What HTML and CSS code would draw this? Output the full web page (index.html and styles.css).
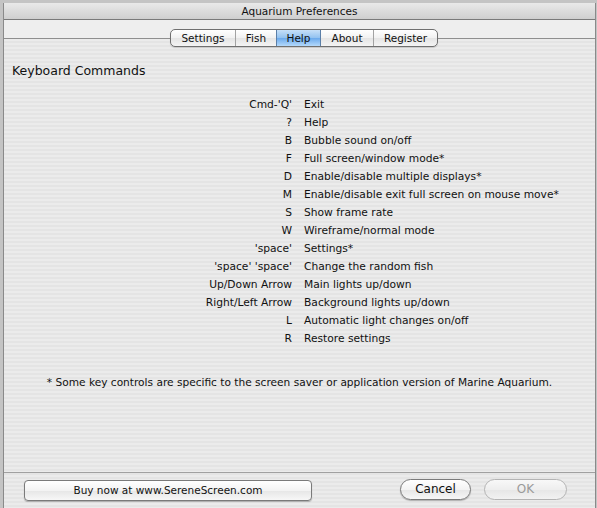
FILE: index.html
```html
<!DOCTYPE html>
<html>
<head>
<meta charset="utf-8">
<link rel="stylesheet" href="styles.css">
</head>
<body>
<div class="window">
  <div class="titlebar">Aquarium Preferences</div>
  <div class="toolstrip"></div>
  <div class="panel">
    <div class="tabs">
      <div class="tab t-settings">Settings</div>
      <div class="tab t-fish">Fish</div>
      <div class="tab t-help active">Help</div>
      <div class="tab t-about">About</div>
      <div class="tab t-register">Register</div>
    </div>
    <div class="heading">Keyboard Commands</div>
    <div class="commands">
      <div class="key">Cmd-'Q'</div><div class="desc">Exit</div>
      <div class="key">?</div><div class="desc">Help</div>
      <div class="key">B</div><div class="desc">Bubble sound on/off</div>
      <div class="key">F</div><div class="desc">Full screen/window mode*</div>
      <div class="key">D</div><div class="desc">Enable/disable multiple displays*</div>
      <div class="key">M</div><div class="desc">Enable/disable exit full screen on mouse move*</div>
      <div class="key">S</div><div class="desc">Show frame rate</div>
      <div class="key">W</div><div class="desc">Wireframe/normal mode</div>
      <div class="key">'space'</div><div class="desc">Settings*</div>
      <div class="key">'space' 'space'</div><div class="desc">Change the random fish</div>
      <div class="key">Up/Down Arrow</div><div class="desc">Main lights up/down</div>
      <div class="key">Right/Left Arrow</div><div class="desc">Background lights up/down</div>
      <div class="key">L</div><div class="desc">Automatic light changes on/off</div>
      <div class="key">R</div><div class="desc">Restore settings</div>
    </div>
    <div class="footnote">* Some key controls are specific to the screen saver or application version of Marine Aquarium.</div>
  </div>
  <div class="footer">
    <div class="btn buy">Buy now at www.SereneScreen.com</div>
    <div class="spacer"></div>
    <div class="btn pill cancel">Cancel</div>
    <div class="btn pill ok">OK</div>
  </div>
</div>
</body>
</html>
```
FILE: styles.css
```css
* { box-sizing: border-box; }
html, body {
  margin: 0;
  padding: 0;
  background: #c4c4c4;
  width: 597px;
  height: 508px;
  overflow: hidden;
  font-family: "DejaVu Sans", "Liberation Sans", sans-serif;
  color: #111;
}
.window {
  margin: 3px 0 0 3px;
  width: 593px;
  height: 505px;
  border-left: 1px solid #8a8a8a;
  border-right: 1px solid #8a8a8a;
  display: flex;
  flex-direction: column;
  background: repeating-linear-gradient(to bottom, #ebebeb 0 2px, #e4e4e4 2px 4px);
}
.titlebar {
  height: 17px;
  background: linear-gradient(to bottom, #e9e9e9, #cfcfcf);
  border-bottom: 1px solid #7a7a7a;
  text-align: center;
  font-size: 10.5px;
  line-height: 16px;
  color: #111;
}
.toolstrip {
  height: 18px;
  background: #eeeeee;
}
.panel {
  position: relative;
  height: 435px;
  border-top: 1px solid #8e8e8e;
  border-bottom: 1px solid #a0a0a0;
  display: flex;
  flex-direction: column;
}
.tabs {
  position: absolute;
  top: -10px;
  left: 166px;
  height: 18px;
  display: flex;
  border: 1px solid #6f6f6f;
  border-radius: 5px;
  overflow: hidden;
  background: linear-gradient(to bottom, #ffffff, #f1f1f1 50%, #e4e4e4 51%, #f4f4f4);
  box-shadow: 0 1px 1px rgba(0,0,0,0.15);
}
.tab {
  font-size: 10.5px;
  line-height: 16px;
  text-align: center;
  border-left: 1px solid #a2a2a2;
}
.tab:first-child { border-left: none; }
.t-settings { width: 64px; }
.t-fish { width: 41px; }
.t-help { width: 44px; }
.t-about { width: 53px; }
.t-register { width: 64px; }
.tab.active {
  background: linear-gradient(to bottom, #c7e0f8, #91c1f0 50%, #6aa9ec 51%, #b4d9fb);
  border-left-color: #5b7fa8;
}
.t-about { border-left-color: #5b7fa8; }
.heading {
  margin: 24px 0 0 8px;
  font-size: 12.5px;
  line-height: 16px;
}
.commands {
  margin-top: 17px;
  display: grid;
  grid-template-columns: 288px auto;
  column-gap: 12px;
  font-size: 10.7px;
  line-height: 18px;
}
.key { text-align: right; }
.footnote {
  margin-top: 26px;
  text-align: center;
  font-size: 10.6px;
  line-height: 16px;
}
.footer {
  flex: 1;
  display: flex;
  align-items: flex-start;
  padding: 7px 28px 0 20px;
}
.spacer { flex: 1; }
.btn {
  height: 21px;
  border: 1px solid #7a7a7a;
  background: linear-gradient(to bottom, #ffffff, #f3f3f3 50%, #e6e6e6 51%, #f7f7f7);
  text-align: center;
  font-size: 10.5px;
  line-height: 19px;
  box-shadow: 0 1px 1px rgba(0,0,0,0.25);
}
.buy {
  width: 288px;
  border-radius: 4px;
}
.pill {
  border-radius: 11px;
  font-size: 12px;
  margin-top: -1px;
}
.cancel { width: 71px; }
.ok {
  width: 83px;
  margin-left: 13px;
  color: #9a9a9a;
  border-color: #b4b4b4;
  box-shadow: none;
  background: linear-gradient(to bottom, #f8f8f8, #eeeeee 50%, #e6e6e6 51%, #f2f2f2);
}
```
